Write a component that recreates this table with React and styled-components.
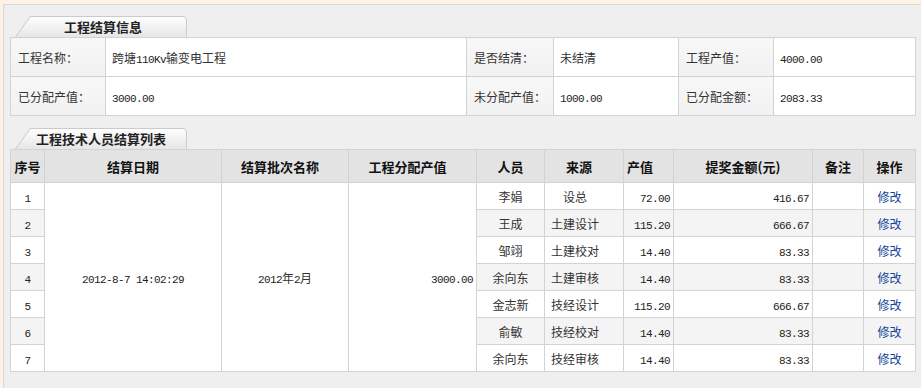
import React from 'react'
import styled, { createGlobalStyle } from 'styled-components'

const GlobalStyle = createGlobalStyle`
  html, body {
    margin: 0;
    padding: 0;
    background: #fcf2e6;
  }
  body {
    font-family: "Noto Sans CJK SC", "DejaVu Sans", sans-serif;
    font-size: 12px;
    color: #333;
  }
`

const Panel = styled.div`
  box-sizing: border-box;
  margin: 4px 0 0 3px;
  min-height: calc(100vh - 4px);
  padding: 11px 5px 0 6px;
  background: #efefef;
  border-top: 1px solid #d9d9d9;
  border-left: 1px solid #d9d9d9;
`

const Section = styled.section`
  & + & {
    margin-top: 12px;
  }
`

const Tab = styled.div`
  position: relative;
  z-index: 0;
  box-sizing: border-box;
  margin-left: 20px;
  width: 157px;
  height: 21px;
  padding-right: ${p => p.$shift || 10}px;
  line-height: 20px;
  font-size: 13px;
  font-weight: bold;
  color: #222;
  text-align: center;
  background: linear-gradient(#fefefe, #e6e6e6);
  border: 1px solid #cbcbcb;
  border-left: none;
  border-bottom: none;
  border-top-right-radius: 5px;

  &::before {
    content: '';
    position: absolute;
    z-index: -1;
    left: -15px;
    top: -1px;
    bottom: 0;
    width: 30px;
    background: linear-gradient(#fefefe, #e6e6e6);
    border-left: 1px solid #cbcbcb;
    border-top: 1px solid #cbcbcb;
    transform: skewX(-36deg);
    transform-origin: bottom left;
  }
`

const Grid = styled.table`
  width: 905px;
  table-layout: fixed;
  border-collapse: collapse;
  background: #fff;
  border: 1px solid #d3d3d3;
`

const Label = styled.td`
  height: 38px;
  padding: 0 7px;
  border: 1px solid #d3d3d3;
  background: linear-gradient(#f8f8f8, #f1f1f1);
  white-space: nowrap;
`

const Value = styled.td`
  height: 38px;
  padding: 0 6px;
  border: 1px solid #d3d3d3;
  background: #fff;
  white-space: nowrap;
`

const Num = styled.span`
  font-family: "Liberation Mono", monospace;
  font-size: 11px;
  letter-spacing: -0.6px;
  color: #222;
`

const Th = styled.th`
  height: 32px;
  padding: 0 ${p => p.$pr || 0}px 0 ${p => p.$pl || 0}px;
  border: 1px solid #d3d3d3;
  background: #e3e3e3;
  font-size: 13px;
  font-weight: bold;
  color: #111;
  text-align: ${p => p.$align || 'center'};
  white-space: nowrap;
`

const Td = styled.td`
  height: 26px;
  padding: 0 ${p => p.$pr || 0}px 0 ${p => p.$pl || 0}px;
  border: 1px solid #d3d3d3;
  background: ${p => (p.$alt ? '#f4f4f4' : '#fff')};
  text-align: ${p => p.$align || 'center'};
  white-space: nowrap;
`

const EditLink = styled.a`
  color: #17439a;
  text-decoration: none;
  cursor: pointer;
`

const staff = [
  { name: '李娟', role: '设总', value: '72.00', bonus: '416.67' },
  { name: '王成', role: '土建设计', value: '115.20', bonus: '666.67' },
  { name: '邹翊', role: '土建校对', value: '14.40', bonus: '83.33' },
  { name: '余向东', role: '土建审核', value: '14.40', bonus: '83.33' },
  { name: '金志新', role: '技经设计', value: '115.20', bonus: '666.67' },
  { name: '俞敏', role: '技经校对', value: '14.40', bonus: '83.33' },
  { name: '余向东', role: '技经审核', value: '14.40', bonus: '83.33' },
]

const InfoTable = () => (
  <Grid>
    <colgroup>
      <col style={{ width: 95 }} />
      <col style={{ width: 361 }} />
      <col style={{ width: 87 }} />
      <col style={{ width: 125 }} />
      <col style={{ width: 95 }} />
      <col style={{ width: 142 }} />
    </colgroup>
    <tbody>
      <tr>
        <Label>工程名称：</Label>
        <Value>跨塘<Num>110Kv</Num>输变电工程</Value>
        <Label>是否结清：</Label>
        <Value>未结清</Value>
        <Label>工程产值：</Label>
        <Value><Num>4000.00</Num></Value>
      </tr>
      <tr>
        <Label>已分配产值：</Label>
        <Value><Num>3000.00</Num></Value>
        <Label>未分配产值：</Label>
        <Value><Num>1000.00</Num></Value>
        <Label>已分配金额：</Label>
        <Value><Num>2083.33</Num></Value>
      </tr>
    </tbody>
  </Grid>
)

const StaffTable = () => (
  <Grid>
    <colgroup>
      <col style={{ width: 34 }} />
      <col style={{ width: 177 }} />
      <col style={{ width: 127 }} />
      <col style={{ width: 128 }} />
      <col style={{ width: 68 }} />
      <col style={{ width: 79 }} />
      <col style={{ width: 50 }} />
      <col style={{ width: 139 }} />
      <col style={{ width: 51 }} />
      <col style={{ width: 52 }} />
    </colgroup>
    <thead>
      <tr>
        <Th>序号</Th>
        <Th>结算日期</Th>
        <Th $pr={10}>结算批次名称</Th>
        <Th $pr={10}>工程分配产值</Th>
        <Th>人员</Th>
        <Th $pr={10}>来源</Th>
        <Th $align="left" $pl={3}>产值</Th>
        <Th>提奖金额(元)</Th>
        <Th>备注</Th>
        <Th>操作</Th>
      </tr>
    </thead>
    <tbody>
      {staff.map((s, i) => {
        const alt = i % 2 === 1
        return (
          <tr key={i}>
            <Td $alt={alt}><Num>{i + 1}</Num></Td>
            {i === 0 && (
              <>
                <Td rowSpan={7}><Num>2012-8-7 14:02:29</Num></Td>
                <Td rowSpan={7}><Num>2012</Num>年<Num>2</Num>月</Td>
                <Td rowSpan={7} $align="right" $pr={3}><Num>3000.00</Num></Td>
              </>
            )}
            <Td $alt={alt}>{s.name}</Td>
            <Td $alt={alt} $pr={18}>{s.role}</Td>
            <Td $alt={alt} $align="right" $pr={3}><Num>{s.value}</Num></Td>
            <Td $alt={alt} $align="right" $pr={3}><Num>{s.bonus}</Num></Td>
            <Td $alt={alt}></Td>
            <Td $alt={alt}><EditLink>修改</EditLink></Td>
          </tr>
        )
      })}
    </tbody>
  </Grid>
)

export default function App() {
  return (
    <>
      <GlobalStyle />
      <Panel>
        <Section>
          <Tab>工程结算信息</Tab>
          <InfoTable />
        </Section>
        <Section>
          <Tab $shift={14}>工程技术人员结算列表</Tab>
          <StaffTable />
        </Section>
      </Panel>
    </>
  )
}
